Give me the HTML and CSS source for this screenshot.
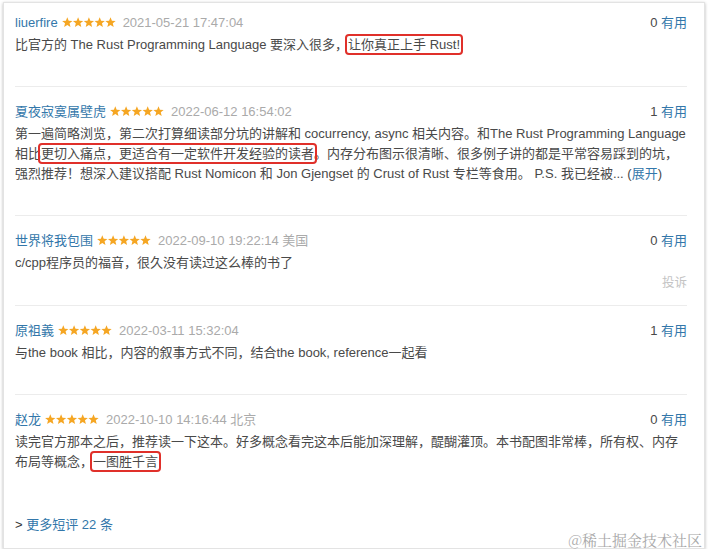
FILE: index.html
```html
<!DOCTYPE html>
<html lang="zh-CN">
<head>
<meta charset="utf-8">
<title>短评</title>
<link rel="stylesheet" href="styles.css">
</head>
<body>
<div class="card">
  <div class="review first">
    <div class="head">
      <div class="meta">
        <a class="name">liuerfire</a>
        <svg class="stars" viewBox="0 0 54 10.5" width="54" height="10.5"><g fill="#f5a623"><polygon points="5.3,0.2 6.71,3.66 10.44,3.93 7.58,6.34 8.47,9.97 5.3,8 2.13,9.97 3.02,6.34 0.16,3.93 3.89,3.66"/><polygon transform="translate(10.8 0)" points="5.3,0.2 6.71,3.66 10.44,3.93 7.58,6.34 8.47,9.97 5.3,8 2.13,9.97 3.02,6.34 0.16,3.93 3.89,3.66"/><polygon transform="translate(21.6 0)" points="5.3,0.2 6.71,3.66 10.44,3.93 7.58,6.34 8.47,9.97 5.3,8 2.13,9.97 3.02,6.34 0.16,3.93 3.89,3.66"/><polygon transform="translate(32.4 0)" points="5.3,0.2 6.71,3.66 10.44,3.93 7.58,6.34 8.47,9.97 5.3,8 2.13,9.97 3.02,6.34 0.16,3.93 3.89,3.66"/><polygon transform="translate(43.2 0)" points="5.3,0.2 6.71,3.66 10.44,3.93 7.58,6.34 8.47,9.97 5.3,8 2.13,9.97 3.02,6.34 0.16,3.93 3.89,3.66"/></g></svg>
        <span class="date">2021-05-21 17:47:04</span>
      </div>
      <div class="votes">0 <a class="link">有用</a></div>
    </div>
    <p class="text">比官方的 The Rust Programming Language 要深入很多，<span class="hl">让你真正上手 Rust!</span></p>
  </div>

  <div class="review">
    <div class="head">
      <div class="meta">
        <a class="name">夏夜寂寞属壁虎</a>
        <svg class="stars" viewBox="0 0 54 10.5" width="54" height="10.5"><g fill="#f5a623"><polygon points="5.3,0.2 6.71,3.66 10.44,3.93 7.58,6.34 8.47,9.97 5.3,8 2.13,9.97 3.02,6.34 0.16,3.93 3.89,3.66"/><polygon transform="translate(10.8 0)" points="5.3,0.2 6.71,3.66 10.44,3.93 7.58,6.34 8.47,9.97 5.3,8 2.13,9.97 3.02,6.34 0.16,3.93 3.89,3.66"/><polygon transform="translate(21.6 0)" points="5.3,0.2 6.71,3.66 10.44,3.93 7.58,6.34 8.47,9.97 5.3,8 2.13,9.97 3.02,6.34 0.16,3.93 3.89,3.66"/><polygon transform="translate(32.4 0)" points="5.3,0.2 6.71,3.66 10.44,3.93 7.58,6.34 8.47,9.97 5.3,8 2.13,9.97 3.02,6.34 0.16,3.93 3.89,3.66"/><polygon transform="translate(43.2 0)" points="5.3,0.2 6.71,3.66 10.44,3.93 7.58,6.34 8.47,9.97 5.3,8 2.13,9.97 3.02,6.34 0.16,3.93 3.89,3.66"/></g></svg>
        <span class="date">2022-06-12 16:54:02</span>
      </div>
      <div class="votes">1 <a class="link">有用</a></div>
    </div>
    <p class="text">第一遍简略浏览，第二次打算细读部分坑的讲解和 cocurrency, async 相关内容。和The Rust Programming Language<br>相比<span class="hl">更切入痛点，更适合有一定软件开发经验的读者</span>。内存分布图示很清晰、很多例子讲的都是平常容易踩到的坑，<br>强烈推荐！想深入建议搭配 Rust Nomicon 和 Jon Gjengset 的 Crust of Rust 专栏等食用。 P.S. 我已经被... (<a class="link">展开</a>)</p>
  </div>

  <div class="review with-report">
    <div class="head">
      <div class="meta">
        <a class="name">世界将我包围</a>
        <svg class="stars" viewBox="0 0 54 10.5" width="54" height="10.5"><g fill="#f5a623"><polygon points="5.3,0.2 6.71,3.66 10.44,3.93 7.58,6.34 8.47,9.97 5.3,8 2.13,9.97 3.02,6.34 0.16,3.93 3.89,3.66"/><polygon transform="translate(10.8 0)" points="5.3,0.2 6.71,3.66 10.44,3.93 7.58,6.34 8.47,9.97 5.3,8 2.13,9.97 3.02,6.34 0.16,3.93 3.89,3.66"/><polygon transform="translate(21.6 0)" points="5.3,0.2 6.71,3.66 10.44,3.93 7.58,6.34 8.47,9.97 5.3,8 2.13,9.97 3.02,6.34 0.16,3.93 3.89,3.66"/><polygon transform="translate(32.4 0)" points="5.3,0.2 6.71,3.66 10.44,3.93 7.58,6.34 8.47,9.97 5.3,8 2.13,9.97 3.02,6.34 0.16,3.93 3.89,3.66"/><polygon transform="translate(43.2 0)" points="5.3,0.2 6.71,3.66 10.44,3.93 7.58,6.34 8.47,9.97 5.3,8 2.13,9.97 3.02,6.34 0.16,3.93 3.89,3.66"/></g></svg>
        <span class="date">2022-09-10 19:22:14 美国</span>
      </div>
      <div class="votes">0 <a class="link">有用</a></div>
    </div>
    <p class="text">c/cpp程序员的福音，很久没有读过这么棒的书了</p>
    <div class="report">投诉</div>
  </div>

  <div class="review">
    <div class="head">
      <div class="meta">
        <a class="name">原祖義</a>
        <svg class="stars" viewBox="0 0 54 10.5" width="54" height="10.5"><g fill="#f5a623"><polygon points="5.3,0.2 6.71,3.66 10.44,3.93 7.58,6.34 8.47,9.97 5.3,8 2.13,9.97 3.02,6.34 0.16,3.93 3.89,3.66"/><polygon transform="translate(10.8 0)" points="5.3,0.2 6.71,3.66 10.44,3.93 7.58,6.34 8.47,9.97 5.3,8 2.13,9.97 3.02,6.34 0.16,3.93 3.89,3.66"/><polygon transform="translate(21.6 0)" points="5.3,0.2 6.71,3.66 10.44,3.93 7.58,6.34 8.47,9.97 5.3,8 2.13,9.97 3.02,6.34 0.16,3.93 3.89,3.66"/><polygon transform="translate(32.4 0)" points="5.3,0.2 6.71,3.66 10.44,3.93 7.58,6.34 8.47,9.97 5.3,8 2.13,9.97 3.02,6.34 0.16,3.93 3.89,3.66"/><polygon transform="translate(43.2 0)" points="5.3,0.2 6.71,3.66 10.44,3.93 7.58,6.34 8.47,9.97 5.3,8 2.13,9.97 3.02,6.34 0.16,3.93 3.89,3.66"/></g></svg>
        <span class="date">2022-03-11 15:32:04</span>
      </div>
      <div class="votes">1 <a class="link">有用</a></div>
    </div>
    <p class="text">与the book 相比，内容的叙事方式不同，结合the book, reference一起看</p>
  </div>

  <div class="review last">
    <div class="head">
      <div class="meta">
        <a class="name">赵龙</a>
        <svg class="stars" viewBox="0 0 54 10.5" width="54" height="10.5"><g fill="#f5a623"><polygon points="5.3,0.2 6.71,3.66 10.44,3.93 7.58,6.34 8.47,9.97 5.3,8 2.13,9.97 3.02,6.34 0.16,3.93 3.89,3.66"/><polygon transform="translate(10.8 0)" points="5.3,0.2 6.71,3.66 10.44,3.93 7.58,6.34 8.47,9.97 5.3,8 2.13,9.97 3.02,6.34 0.16,3.93 3.89,3.66"/><polygon transform="translate(21.6 0)" points="5.3,0.2 6.71,3.66 10.44,3.93 7.58,6.34 8.47,9.97 5.3,8 2.13,9.97 3.02,6.34 0.16,3.93 3.89,3.66"/><polygon transform="translate(32.4 0)" points="5.3,0.2 6.71,3.66 10.44,3.93 7.58,6.34 8.47,9.97 5.3,8 2.13,9.97 3.02,6.34 0.16,3.93 3.89,3.66"/><polygon transform="translate(43.2 0)" points="5.3,0.2 6.71,3.66 10.44,3.93 7.58,6.34 8.47,9.97 5.3,8 2.13,9.97 3.02,6.34 0.16,3.93 3.89,3.66"/></g></svg>
        <span class="date">2022-10-10 14:16:44 北京</span>
      </div>
      <div class="votes">0 <a class="link">有用</a></div>
    </div>
    <p class="text">读完官方那本之后，推荐读一下这本。好多概念看完这本后能加深理解，醍醐灌顶。本书配图非常棒，所有权、内存<br>布局等概念，<span class="hl">一图胜千言</span></p>
  </div>

  <div class="more">&gt; <a class="link">更多短评 22 条</a></div>

  <div class="watermark">@稀土掘金技术社区</div>
</div>
</body>
</html>
```
FILE: styles.css
```css
html, body {
  margin: 0;
  padding: 0;
  background: #ffffff;
}

body {
  font-family: "Liberation Sans", Arial, "Noto Sans CJK SC", sans-serif;
  font-size: 13px;
  color: #494949;
}

.card {
  position: relative;
  box-sizing: border-box;
  width: 702px;
  height: 547px;
  margin: 2px 0 0 3px;
  padding: 10px 17px 0 11px;
  background: #fff;
  border: 1px solid #e3e3e3;
  box-shadow: 0 1px 3px rgba(0, 0, 0, 0.28);
}

.review {
  padding: 15px 0 31px;
  border-bottom: 1px solid #ececec;
}

.review.first {
  padding-top: 0;
}

.review.last {
  border-bottom: none;
}

.review.with-report {
  padding-bottom: 12px;
}

.head {
  display: flex;
  justify-content: space-between;
  align-items: center;
  height: 20px;
  line-height: 20px;
}

.meta {
  display: flex;
  align-items: center;
  white-space: nowrap;
}

.name {
  color: #3377aa;
  text-decoration: none;
}

.stars {
  display: block;
  margin: 0 7px 1px 4px;
}

.date {
  color: #aaaaaa;
}

.votes {
  color: #494949;
}

.link {
  color: #3377aa;
  text-decoration: none;
}

.text {
  margin: 2px 0 0;
  line-height: 20px;
  white-space: nowrap;
}

.hl {
  outline: 2px solid #e0302a;
  outline-offset: 1px;
  border-radius: 1px;
}

.report {
  text-align: right;
  color: #c4c4c4;
  line-height: 20px;
  font-size: 12.5px;
}

.more {
  margin-top: 12px;
  line-height: 20px;
  color: #333;
}

.watermark {
  position: absolute;
  right: 2px;
  bottom: -1px;
  font-family: "Noto Serif CJK SC", "Noto Sans CJK SC", serif;
  font-size: 15px;
  line-height: 18px;
  color: #a8a8a8;
  letter-spacing: 0;
}
```
